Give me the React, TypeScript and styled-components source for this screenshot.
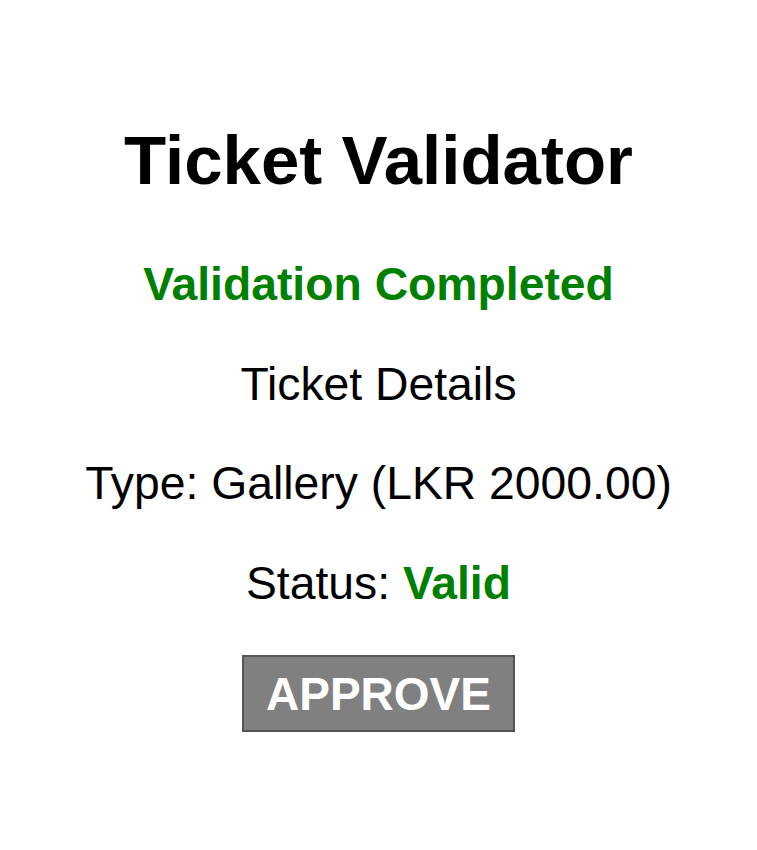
import React from "react";
import styled, { createGlobalStyle } from "styled-components";

const GlobalStyle = createGlobalStyle`
  body {
    margin: 0;
    background: #ffffff;
    font-family: "Liberation Sans", Arial, sans-serif;
  }
`;

const Page = styled.main`
  padding-top: 63px;
  text-align: center;
  font-size: 46.3px;
  color: #000000;
`;

const Title = styled.h2`
  font-size: 69px;
  font-weight: bold;
  margin: 57.5px 0;
`;

const Line = styled.p<{ $bold?: boolean; $green?: boolean }>`
  margin: 45.6px 0;
  font-weight: ${(p) => (p.$bold ? "bold" : "normal")};
  color: ${(p) => (p.$green ? "#008000" : "#000000")};
`;

const Valid = styled.span`
  color: #008000;
  font-weight: bold;
`;

const ApproveButton = styled.button`
  font-family: "Liberation Sans", Arial, sans-serif;
  font-size: 46px;
  font-weight: bold;
  color: #ffffff;
  background: #808080;
  border: 2px solid #555555;
  padding: 9.5px 22px;
  cursor: pointer;
`;

export default function App() {
  return (
    <>
      <GlobalStyle />
      <Page>
        <Title>Ticket Validator</Title>
        <Line $bold $green>Validation Completed</Line>
        <Line>Ticket Details</Line>
        <Line>Type: Gallery (LKR 2000.00)</Line>
        <Line>
          Status: <Valid>Valid</Valid>
        </Line>
        <ApproveButton type="button">APPROVE</ApproveButton>
      </Page>
    </>
  );
}
